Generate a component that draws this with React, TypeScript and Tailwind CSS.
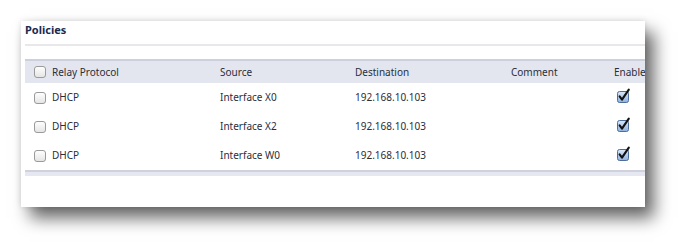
import React from 'react';

interface Policy {
  protocol: string;
  source: string;
  destination: string;
  comment: string;
  enabled: boolean;
}

const policies: Policy[] = [
  { protocol: 'DHCP', source: 'Interface X0', destination: '192.168.10.103', comment: '', enabled: true },
  { protocol: 'DHCP', source: 'Interface X2', destination: '192.168.10.103', comment: '', enabled: true },
  { protocol: 'DHCP', source: 'Interface W0', destination: '192.168.10.103', comment: '', enabled: true },
];

const EmptyBox: React.FC = () => (
  <svg width="12" height="12" viewBox="0 0 12 12" className="shrink-0">
    <defs>
      <linearGradient id="eb" x1="0" y1="0" x2="0" y2="1">
        <stop offset="0" stopColor="#ffffff" />
        <stop offset="1" stopColor="#e4e4e4" />
      </linearGradient>
    </defs>
    <rect x="0.5" y="0.5" width="11" height="11" rx="2.5" fill="url(#eb)" stroke="#9a9a9a" />
  </svg>
);

const CheckedBox: React.FC = () => (
  <svg width="13" height="14" viewBox="0 0 13 14" className="shrink-0 overflow-visible">
    <defs>
      <linearGradient id="cb" x1="0" y1="0" x2="0" y2="1">
        <stop offset="0" stopColor="#dbe8f8" />
        <stop offset="1" stopColor="#8eb1e0" />
      </linearGradient>
    </defs>
    <rect x="0.5" y="2.5" width="11" height="11" rx="2" fill="url(#cb)" stroke="#4d6d9c" />
    <path d="M2.6 7.4 L5 10.6 L11.8 0.6" fill="none" stroke="#111" strokeWidth="2.1" strokeLinecap="round" strokeLinejoin="round" />
  </svg>
);

const App: React.FC = () => {
  return (
    <div className="w-[687px] h-[250px] bg-white pt-[21px] pl-[21px] font-['Noto_Sans',sans-serif] text-[10px] text-[#2a2e3b]">
      <div className="w-[624px] h-[186px] bg-white overflow-hidden shadow-[9px_11px_16px_rgba(0,0,0,0.6),0_0_6px_rgba(0,0,0,0.12)]">
        <div className="pl-[4px]">
          <div className="h-[23px] flex items-center pb-[4px] font-bold text-[11px] text-[#1c2a4f]">Policies</div>
          <div className="h-[2px] bg-[#e8e8ea]" />
          <div className="h-[13px]" />

          <div className="grid grid-cols-[195px_135px_156px_103px_1fr] h-[24px] items-center bg-[#e3e6ef] border-t-2 border-[#cdd0db] whitespace-nowrap">
            <div className="flex items-center gap-[6px] pl-[9px]">
              <EmptyBox />
              <span>Relay Protocol</span>
            </div>
            <div>Source</div>
            <div>Destination</div>
            <div>Comment</div>
            <div>Enable</div>
          </div>

          {policies.map((p, i) => (
            <div key={i} className="grid grid-cols-[195px_135px_156px_103px_1fr] h-[29px] items-center whitespace-nowrap">
              <div className="flex items-center gap-[6px] pl-[9px]">
                <EmptyBox />
                <span>{p.protocol}</span>
              </div>
              <div>{p.source}</div>
              <div>{p.destination}</div>
              <div>{p.comment}</div>
              <div className="pl-[3px] -mt-[3px]">{p.enabled && <CheckedBox />}</div>
            </div>
          ))}

          <div className="h-[6px] bg-[#e6e8f1] border-t-2 border-[#cfd2dd]" />
        </div>
      </div>
    </div>
  );
};

export default App;
